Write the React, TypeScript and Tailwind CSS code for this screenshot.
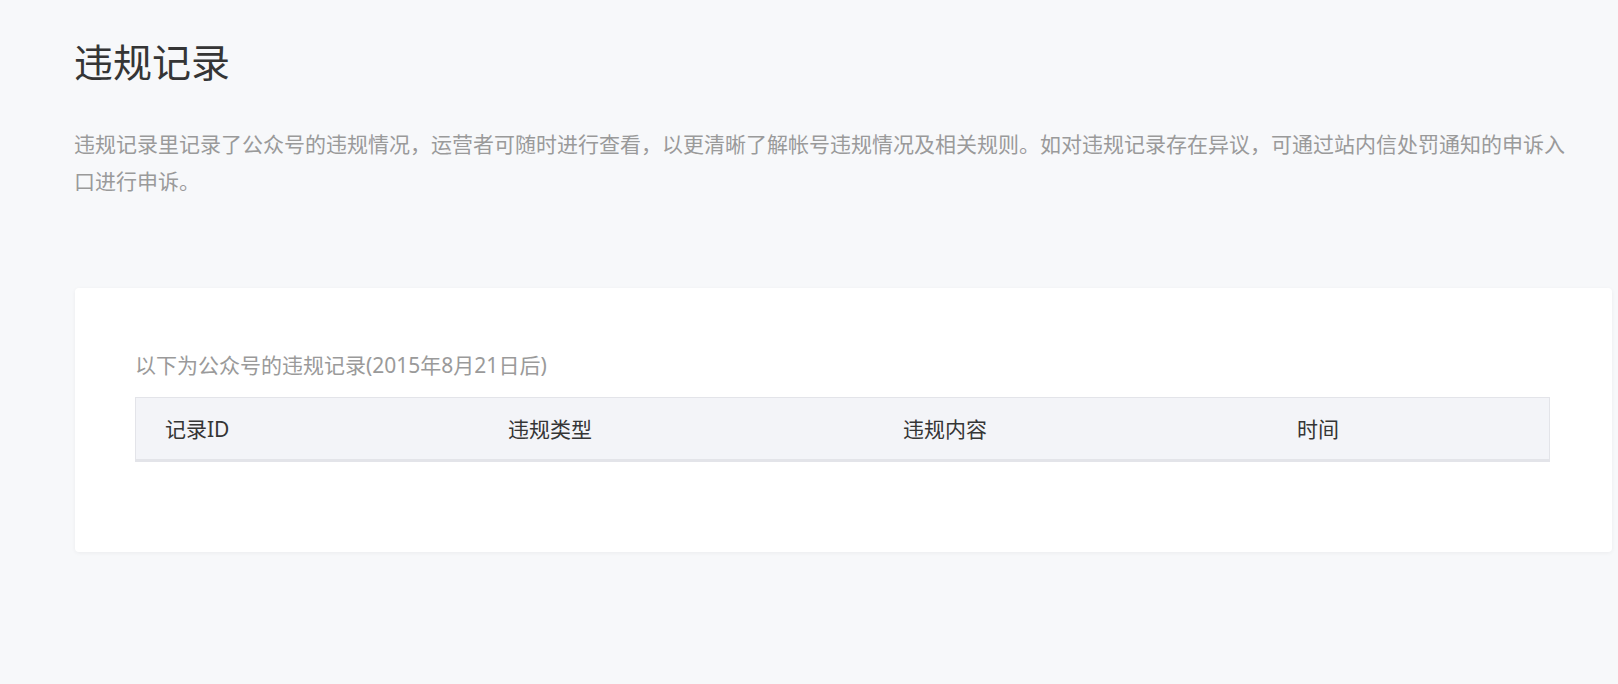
const FONT = '"Noto Sans", "Noto Sans CJK SC", sans-serif';

const columns = ['记录ID', '违规类型', '违规内容', '时间'];

export default function App() {
  return (
    <div
      className="min-h-screen bg-[#f7f8fa] pl-[74px] pr-[6px]"
      style={{ fontFamily: FONT }}
    >
      <h1 className="pt-[34px] text-[39px] leading-[56px] font-normal text-[#353535]">
        违规记录
      </h1>

      <p className="mt-[36px] w-[1500px] text-[21px] leading-[37px] text-[#9a9a9a]">
        违规记录里记录了公众号的违规情况，运营者可随时进行查看，以更清晰了解帐号违规情况及相关规则。如对违规记录存在异议，可通过站内信处罚通知的申诉入口进行申诉。
      </p>

      {/* Records card */}
      <div className="mt-[88px] ml-px rounded-[4px] bg-white pt-[62px] pl-[60px] pr-[62px] pb-[90px] shadow-[0_1px_4px_rgba(0,0,0,0.05)]">
        <div className="text-[21px] leading-[30px] text-[#9a9a9a]">
          以下为公众号的违规记录(2015年8月21日后)
        </div>

        <div className="mt-[17px] grid h-[65px] grid-cols-[343px_395px_394px_1fr] items-center border border-b-[3px] border-[#e3e4e9] bg-[#f3f4f8]">
          {columns.map((c) => (
            <div key={c} className="pl-[29px] text-[21px] leading-[30px] text-[#353535]">
              {c}
            </div>
          ))}
        </div>
      </div>
    </div>
  );
}
